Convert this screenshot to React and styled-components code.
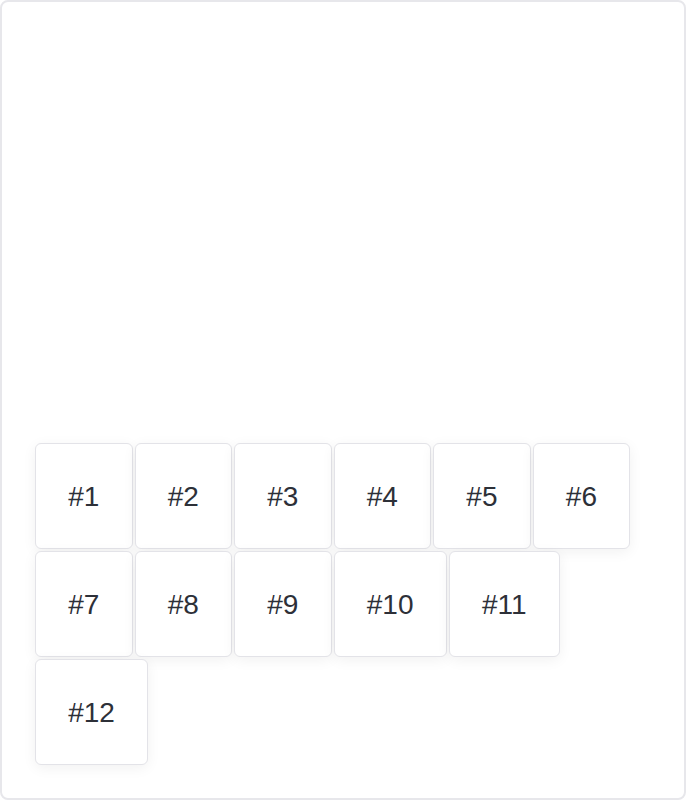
import React from "react";
import styled, { createGlobalStyle } from "styled-components";

const Global = createGlobalStyle`
  html, body { margin: 0; padding: 0; background: #ffffff; }
  body { font-family: "Liberation Sans", Arial, sans-serif; }
  * { box-sizing: border-box; }
`;

const Board = styled.div`
  height: 800px;
  width: 686px;
  border: 2px solid #e7e7eb;
  border-radius: 8px;
  padding: 32px;
  display: flex;
  flex-wrap: wrap;
  align-content: flex-end;
  background: #ffffff;
`;

const Tile = styled.div`
  margin: 1px;
  padding: 37px 32.2px 35px;
  border: 1px solid #e3e3e8;
  border-radius: 6px;
  background: #ffffff;
  box-shadow: 0 3px 14px rgba(0, 0, 0, 0.06);
  font-family: "Liberation Sans", Arial, sans-serif;
  font-size: 28px;
  line-height: 32px;
  color: #2d3038;
  white-space: nowrap;
`;

export default function App() {
  const items = Array.from({ length: 12 }, (_, i) => i + 1);
  return (
    <>
      <Global />
      <Board>
        {items.map((n) => (
          <Tile key={n}>#{n}</Tile>
        ))}
      </Board>
    </>
  );
}
